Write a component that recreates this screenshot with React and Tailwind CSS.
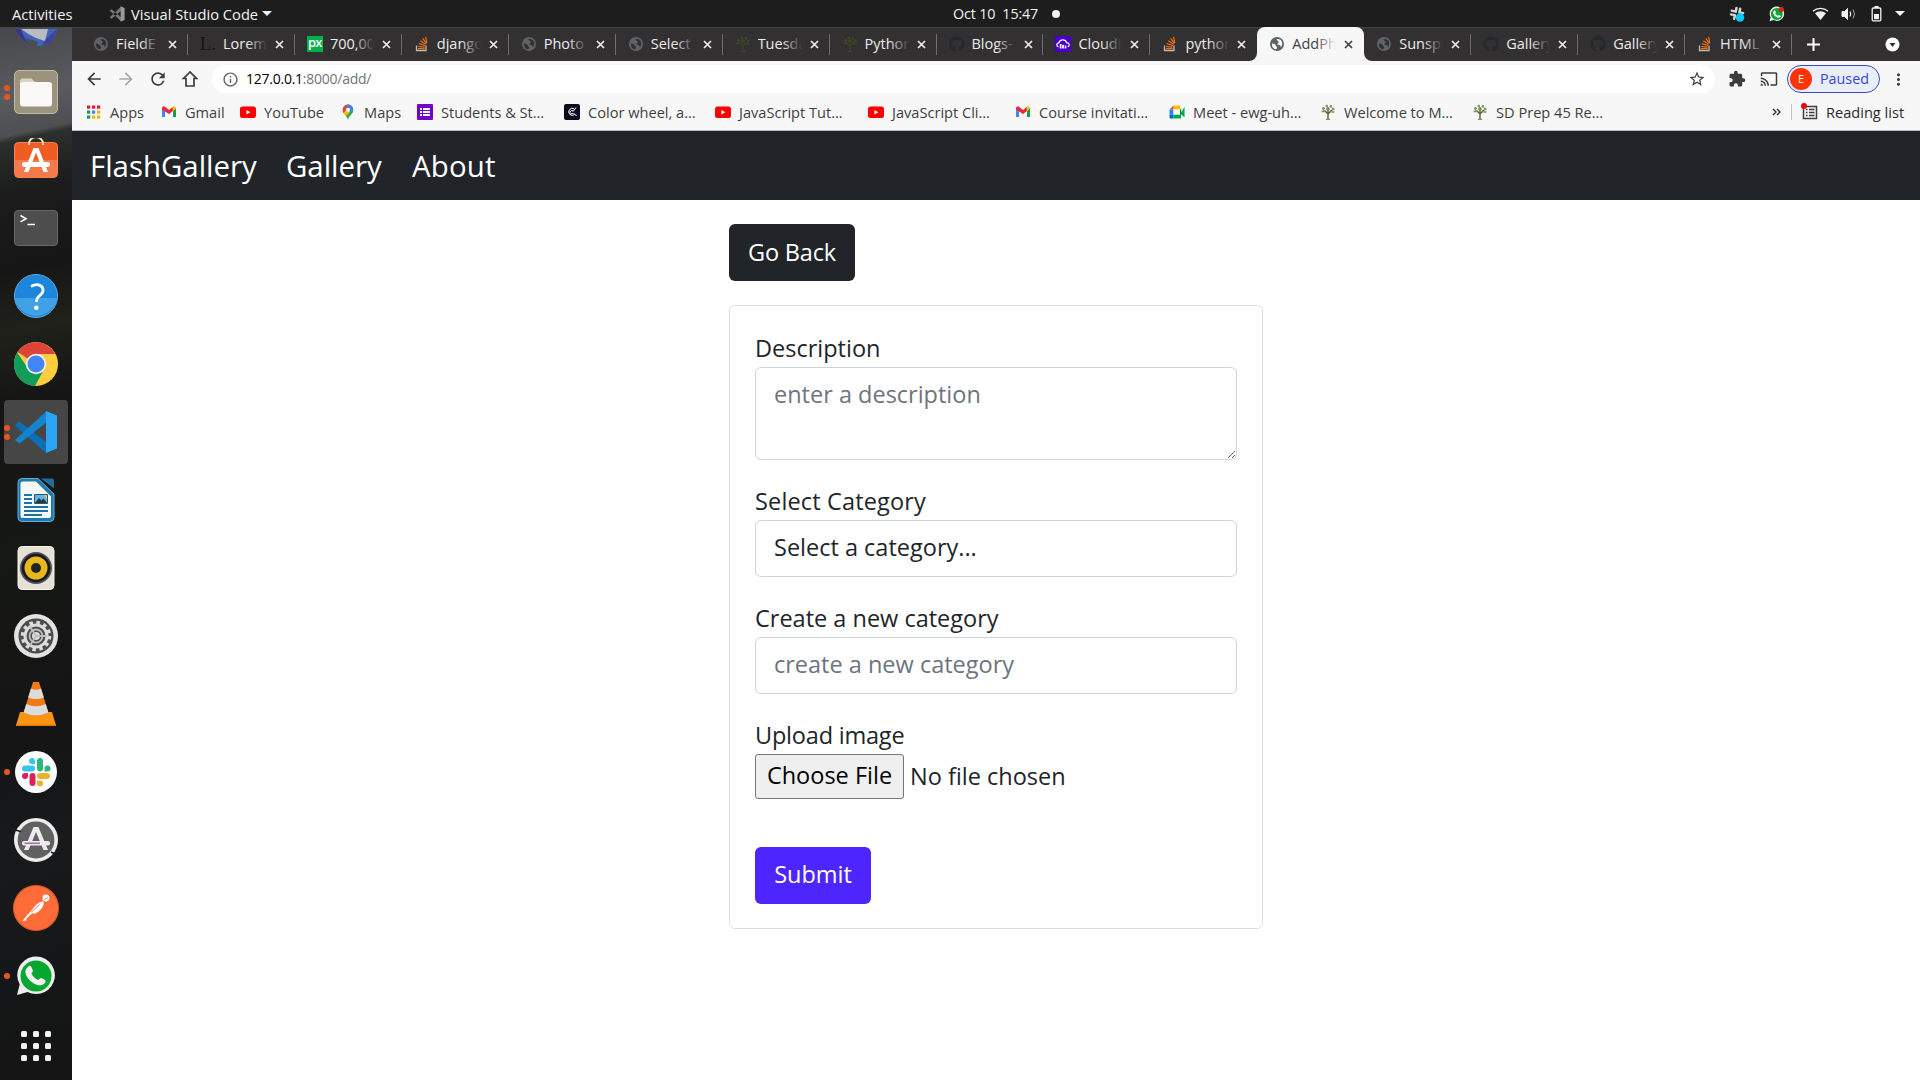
import React from "react";
import { FaGithub } from "react-icons/fa";
import { MdArrowBack, MdArrowForward, MdRefresh, MdInfoOutline, MdExtension, MdCast, MdStarBorder, MdMoreVert } from "react-icons/md";

const Box = ({ children, size = 44 }) => (
  <svg width={size} height={size} viewBox="0 0 44 44" className="block shrink-0">{children}</svg>
);

/* ---------- favicons, 16px ---------- */
const GlobeTab = () => (
  <svg width="16" height="16" viewBox="0 0 16 16" className="block">
    <circle cx="8" cy="8" r="7" fill="#5f6368" />
    <path d="M3 7.5C5 7.3 6.5 8.5 6.8 9.4 7 10.3 8.3 10.4 8 12c-.3 1.4-1.4 1.3-1.7 1.3C4 12.500 2.600 10.600 3 7.500zM7.500 3.200C8 5 9.500 4.600 9.600 6.200 9.600 7.400 8.200 7 8.400 8.200c.2.900 1.600.500 2.600 1 .800.500.800 1.600.500 2.400C13.800 9.700 14 5.500 11 3.500 9.800 2.800 8.500 2.800 7.500 3.200z" fill="currentColor" />
  </svg>
);
const LoremFav = () => (
  <span className="flex size-4 items-center justify-center font-['Liberation_Serif',serif] text-[19px] leading-4 text-[#161616]">L.</span>
);
const PxFav = () => (
  <span className="flex size-4 items-center justify-center bg-[#05b04a] pb-[3px] font-['Open_Sans',sans-serif] text-[13px] font-semibold leading-[13px] tracking-[-0.8px] text-white">px</span>
);
const StackFav = () => (
  <svg width="16" height="16" viewBox="0 0 16 16" className="block" fill="none">
    <path d="M2.500 9.500v5h9.500v-5" stroke="#bcbbbb" strokeWidth="1.300" />
    <path d="M4 12.700h6.600M4.100 10.500l6.500.7M4.800 7.700l6.200 1.800M6.300 4.800l5.400 3.500M8.600 2.300l4 5.100M11.600.800l1.200 6.200" stroke="#f4700c" strokeWidth="1.200" />
  </svg>
);
const TreeFav = ({ dark }) => (
  <svg width="16" height="16" viewBox="0 0 16 16" className="block" fill="none" stroke={dark ? "#3c4a27" : "#7d9160"}>
    <path d="M8 15.500V7M8 10L4.500 6.500M8 10l4-4M8 7V3" stroke={dark ? "#384322" : "#5b6a3c"} strokeWidth="1.500" />
    <path d="M6 15.300h4M2 4.500h3M3.500 3v3.500M5.500 2h2.500M7 .800v2.700M9.500 2.200h2.500M11 1v3M12 5h2.500M13 3.500v3M1.500 7.500h3M11.500 8h3M6 5h4" strokeWidth="1.300" />
  </svg>
);
const GithubFav = () => <FaGithub className="size-4 text-[#24292e]" />;
const CloudFav = () => (
  <svg width="16" height="16" viewBox="0 0 16 16" className="block">
    <rect width="16" height="16" fill="#4a00c8" />
    <path d="M3.500 11C.800 10 1.500 7 3.800 6.800 4.800 3 10.500 2.700 11.500 6.600c3 0 3.600 3.400 1.200 4.400" fill="none" stroke="#fff" strokeWidth="1.200" />
    <path d="M4.800 8h1.700v4.500H4.800zM7.200 8.800h1.700v3.700H7.200zM9.700 9.500h1.600v3H9.700z" fill="#fff" />
  </svg>
);
const AppsFav = () => (
  <svg width="16" height="16" viewBox="0 0 16 16" className="block">
    {[["#e8173b", "#e8173b", "#e8173b"], ["#0f9d58", "#4285f4", "#f4b400"], ["#0f9d58", "#f4b400", "#f4b400"]].map((row, r) =>
      row.map((c, i) => <rect key={`${r}${i}`} x={1 + i * 5} y={1.5 + r * 5} width="3.200" height="3.200" fill={c} />)
    )}
  </svg>
);
const GmailFav = () => (
  <svg width="16" height="16" viewBox="0 0 16 16" className="block">
    <path d="M1 4v9h3V6z" fill="#4285f4" /><path d="M15 4v9h-3V6z" fill="#0f9d58" />
    <path d="M1 4.500C1 2.500 3 2 4.300 3L8 6l3.700-3L12 7 8 10 1 5.500z" fill="#ea2a33" />
    <path d="M11.700 3C13 2 15 2.500 15 4.500L12 7.500z" fill="#fbbc04" />
  </svg>
);
const YoutubeFav = () => (
  <svg width="16" height="16" viewBox="0 0 16 16" className="block">
    <rect y="2.500" width="16" height="11.500" rx="2.500" fill="#f00" /><path d="M6.400 5.900v4.600l4-2.300z" fill="#fff" />
  </svg>
);
const MapsFav = () => (
  <svg width="16" height="16" viewBox="0 0 16 16" className="block">
    <clipPath id="pin"><path d="M8 .5a5.300 5.300 0 0 1 5.300 5.300C13.300 10 9.500 11 8 15.700 6.500 11 2.700 10 2.700 5.800A5.300 5.300 0 0 1 8 .5z" /></clipPath>
    <g clipPath="url(#pin)">
      <rect width="16" height="16" fill="#34a853" /><path d="M0 0h12L0 12z" fill="#ea4335" /><path d="M7 0h9v3L8 10z" fill="#4285f4" />
      <path d="M1 12l6.500-7.500L10 8l-5 5z" fill="#fbbc04" />
    </g>
    <circle cx="8" cy="5.800" r="2" fill="#fff" />
  </svg>
);
const FormsFav = () => (
  <svg width="16" height="16" viewBox="0 0 16 16" className="block">
    <rect width="16" height="16" rx="1" fill="#7200ca" />
    <path d="M3 4h2v2H3zM6 4h7v2H6zM3 7h2v2H3zM6 7h7v2H6zM3 10h2v2H3zM6 10h7v2H6z" fill="#fff" />
  </svg>
);
const WheelFav = () => (
  <svg width="16" height="16" viewBox="0 0 16 16" className="block" fill="none" stroke="#fff">
    <rect width="16" height="16" rx="2" fill="#0b0b1e" stroke="none" />
    <path d="M10 4.800A3.500 3.500 0 1 0 10.500 10.500M9 7a1.700 1.700 0 1 0 .2 2.200M9.200 7.500l2.800-4M9.500 9l3 3" strokeWidth="1" />
  </svg>
);
const MeetFav = () => (
  <svg width="16" height="16" viewBox="0 0 16 16" className="block">
    <path d="M4.500 1.500H11v4H4.500z" fill="#fbbc04" /><path d="M.500 5.500l4-4v4z" fill="#ea4335" /><path d="M.500 5.500h4v5h-4z" fill="#2684fc" />
    <path d="M.500 10.500h4v4H1.800a1.300 1.300 0 0 1-1.300-1.300z" fill="#0066da" /><path d="M4.500 10.500H11l4.500-7.700v10.400L12 10.500v4H4.500z" fill="#00ac47" />
    <path d="M4.500 5.500H11v5H4.500z" fill="#fff" /><path d="M11 5.500v5l1.200-1V4.300z" fill="#00832d" />
  </svg>
);

const TABS = [
  ["FieldE", GlobeTab], ["Lorem", LoremFav], ["700,00", PxFav], ["django", StackFav], ["Photo", GlobeTab], ["Select", GlobeTab],
  ["Tuesda", () => <TreeFav dark />], ["Python", () => <TreeFav dark />], ["Blogs-", GithubFav], ["Cloudi", CloudFav], ["python", StackFav],
  ["AddPh", GlobeTab], ["Sunspl", GlobeTab], ["Gallery", GithubFav], ["Gallery", GithubFav], ["HTML", StackFav],
];

const CloseX = () => (
  <svg width="9" height="9" viewBox="0 0 9 9" className="block shrink-0"><path d="M1 1l7 7M8 1L1 8" stroke="currentColor" strokeWidth="1.700" /></svg>
);

function Tab({ title, Icon, active, divider }) {
  return (
    <div className={`relative flex h-[34px] w-[106.94px] shrink-0 items-center pl-[12px] ${active ? "rounded-t-lg bg-[#f7f7f7] text-[#3c4043]" : "text-[#ececec]"}`}>
      <span className={`flex w-4 shrink-0 justify-center ${active ? "text-[#f7f7f7]" : "text-[#333031]"}`}><Icon /></span>
      <span className="relative ml-[7px] h-5 w-[44px] overflow-hidden whitespace-nowrap text-[14.500px] leading-5">
        {title}
        <span className={`absolute inset-y-0 right-0 w-[20px] bg-gradient-to-r ${active ? "from-transparent to-[#f7f7f7]" : "from-transparent to-[#333031]"}`} />
      </span>
      <span className="ml-[8px]"><CloseX /></span>
      {divider && <span className="absolute right-0 top-[7px] h-[21px] w-px bg-[#6e6c6d]" />}
      {active && (
        <>
          <svg width="8" height="8" className="absolute -left-2 bottom-0"><path d="M8 0v8H0a8 8 0 0 0 8-8z" fill="#f7f7f7" /></svg>
          <svg width="8" height="8" className="absolute -right-2 bottom-0"><path d="M0 0v8h8a8 8 0 0 1-8-8z" fill="#f7f7f7" /></svg>
        </>
      )}
    </div>
  );
}

const BOOKMARKS = [
  ["Apps", AppsFav, "w-[75px]"], ["Gmail", GmailFav, "w-[79px]"], ["YouTube", YoutubeFav, "w-[100px]"], ["Maps", MapsFav, "w-[77px]"],
  ["Students & St…", FormsFav, "w-[147px]"], ["Color wheel, a…", WheelFav, "w-[151px]"], ["JavaScript Tut…", YoutubeFav, "w-[153px]"],
  ["JavaScript Cli…", YoutubeFav, "w-[147px]"], ["Course invitati…", GmailFav, "w-[154px]"], ["Meet - ewg-uh…", MeetFav, "w-[151px]"],
  ["Welcome to M…", TreeFav, "w-[152px]"], ["SD Prep 45 Re…", TreeFav, "w-[150px]"],
];

/* ---------- dock icons ---------- */
const Files = () => (
  <Box>
    <rect x=".5" y=".5" width="43" height="43" rx="4.500" fill="#9c937c" stroke="#c0b9a6" />
    <path d="M6 11a2.500 2.500 0 0 1 2.500-2.500h9l3 3H22v8H6z" fill="#d9d4c5" />
    <rect x="6" y="12" width="32" height="24.500" rx="3" fill="#faf9f7" />
  </Box>
);
const Software = () => (
  <Box>
    <rect x=".5" y="4.500" width="43" height="35" rx="4" fill="#f15c22" stroke="#f88358" />
    <path d="M1 22h42v13.500a4 4 0 0 1-4 4H5a4 4 0 0 1-4-4z" fill="#f37b4b" />
    <path d="M15 7V5.500a7 6.500 0 0 1 14 0V7" fill="none" stroke="#f5deb4" strokeWidth="2" />
    <path d="M19.500 10h5l9.500 24h-4.500L22 14.500 14.500 34H10z" fill="#fff" />
    <rect x="8" y="24" width="28" height="5" rx="2" fill="#fff" />
  </Box>
);
const Terminal = () => (
  <Box>
    <rect x=".5" y="4.500" width="43" height="35" rx="3.500" fill="#4d4d4d" stroke="#686868" />
    <path d="M6.500 9.500l5.500 3.200-5.500 3.200M13.500 18.500H21" fill="none" stroke="#fff" strokeWidth="1.600" />
  </Box>
);
const Help = () => (
  <Box>
    <circle cx="22" cy="22" r="21.500" fill="#1c86dc" stroke="#5aaee8" />
    <path d="M.8 24h42.400A21.500 21.500 0 0 1 .8 24z" fill="#41a1e6" />
    <path d="M17 12.500c7-4 12.500-.5 12 4.500-.5 4.500-6.500 5-6.500 9.500v1.500" fill="none" stroke="#fff" strokeWidth="2.800" />
    <circle cx="22.300" cy="33.800" r="2.300" fill="#fff" />
  </Box>
);
const Chrome = () => (
  <Box>
    <circle cx="22" cy="22" r="22" fill="#ffcd40" />
    <path d="M22 22L3.500 10A22 22 0 0 1 41.200 12H22z" fill="#db4437" />
    <path d="M3.200 10.500A22 22 0 0 0 21 44l9-16.500-16-1z" fill="#119c57" />
    <circle cx="22" cy="22" r="10.200" fill="#f2f2f2" /><circle cx="22" cy="22" r="8.500" fill="#4285f4" />
  </Box>
);
const VsCode = () => (
  <Box>
    <path d="M1 15.500l4.500-4 28 21.500L32 43z" fill="#0b6fb8" />
    <path d="M1 30l4.500 3.500L33 12 32 1.500z" fill="#1584cf" />
    <path d="M32 1l11 4.500v33L32 43z" fill="#2aa6f4" />
  </Box>
);
const Writer = () => (
  <Box>
    <path d="M8 .5h16L40 16v23.500a4 4 0 0 1-4 4H8a4 4 0 0 1-4-4v-35a4 4 0 0 1 4-4z" fill="#1d7ab0" stroke="#67add5" />
    <path d="M8.500 3.500H22L37 18.500V38a2 2 0 0 1-2 2H8.500a2 2 0 0 1-2-2V5.500a2 2 0 0 1 2-2z" fill="#f7f7f7" />
    <path d="M27 .5h11a2 2 0 0 1 2 2v8z" fill="#1d6d9e" />
    <path d="M10 17h8M10 21h8M10 25h8M10 29h24M10 33h24M10 37h18" stroke="#1a72a7" strokeWidth="1.800" />
    <path d="M20.500 16.500h13v9h-13z" fill="#5fb5e5" stroke="#1a5b86" />
    <path d="M21 25l4-5 2.500 2.500 2-2 3.500 4.500z" fill="#333" /><path d="M29.500 17H33v4z" fill="#f4c430" />
  </Box>
);
const Rhythmbox = () => (
  <Box>
    <rect x="4" y=".5" width="36" height="43" rx="4" fill="#e6e0d5" stroke="#f7f4ed" />
    <circle cx="22" cy="22" r="16" fill="#4a5058" /><circle cx="22" cy="22" r="14.200" fill="#16191f" />
    <circle cx="22" cy="22" r="11.500" fill="#e9b91c" /><circle cx="22" cy="22" r="5" fill="#222" />
  </Box>
);
const Settings = () => (
  <Box>
    <circle cx="22" cy="22" r="22" fill="#e2e2e2" /><circle cx="22" cy="22" r="17.500" fill="#4c4c4c" />
    <circle cx="22" cy="22" r="13.500" fill="none" stroke="#dcdcdc" strokeWidth="3.500" strokeDasharray="3.500 3.570" />
    <circle cx="22" cy="22" r="11" fill="none" stroke="#dcdcdc" strokeWidth="3" />
    <circle cx="22" cy="22" r="6.500" fill="none" stroke="#bdbdbd" strokeWidth="1.800" />
    <circle cx="22" cy="22" r="4" fill="#dcdcdc" />
    <path d="M22 22h11M22 22l-6 9.500M22 22l-6-9.500" stroke="#bdbdbd" strokeWidth="1.800" />
  </Box>
);
const Vlc = () => (
  <Box>
    <path d="M6 30h32l4 13.500H2z" fill="#fb9410" />
    <path d="M2 42.500h40V45H2z" fill="#e97500" />
    <path d="M19 0q3-2 6 0l9.500 31q-12.500 6-25 0z" fill="#f07a13" />
    <path d="M16.900 6.500q5.100 2.500 10.200 0l2.700 9q-7.800 3-15.600 0zM12.300 22q9.700 4.500 19.400 0l2.700 8.500q-12.400 6-24.800 0z" fill="#dcdcdc" />
  </Box>
);
const Slack = () => (
  <Box>
    <circle cx="22" cy="22" r="21" fill="#fff" />
    <path d="M21 14v-3a3 3 0 1 0-3 3z" fill="#36c5f0" /><rect x="8" y="15.500" width="13" height="6" rx="3" fill="#36c5f0" />
    <rect x="23" y="8" width="6" height="13.500" rx="3" fill="#2eb67d" /><path d="M30.500 21.500v-3a3 3 0 1 1 3 3z" fill="#2eb67d" />
    <rect x="23" y="23" width="13" height="6" rx="3" fill="#ecb22e" /><path d="M23 30.500h3a3 3 0 1 1-3 3z" fill="#ecb22e" />
    <rect x="15.500" y="23" width="6" height="13" rx="3" fill="#e01e5a" /><path d="M14 23v3a3 3 0 1 1-3-3z" fill="#e01e5a" />
  </Box>
);
const Updater = () => (
  <Box>
    <circle cx="22" cy="22" r="20.200" fill="#616161" stroke="#ececec" strokeWidth="3.600" />
    <path d="M1 12l6 1.500M37 34l5 2.500" stroke="#1a1a1a" strokeWidth="1.500" />
    <path d="M19.500 9h5L34 32h-4.500L22 14 14.500 32H10z" fill="#ececec" />
    <rect x="8" y="23" width="28" height="4.500" rx="2" fill="#ececec" /><path d="M10.500 25.200H26" stroke="#9b4a9b" strokeWidth="1.200" />
  </Box>
);
const Postman = () => (
  <Box size={46}>
    <circle cx="22" cy="22" r="21.500" fill="#ff6c37" stroke="#dd5626" />
    <circle cx="31.500" cy="12.500" r="3.300" fill="#fff" />
    <path d="M29 15.500c-4 .5-8 4-10.500 8L13 29.500l-4 5 4-.5-.5-1.800 6-5.200 2.500.5c4.500-2 8-6 8.500-10z" fill="#fff" />
    <path d="M17.500 26l8-7.500M30 14l3.500-2" stroke="#ff6c37" strokeWidth=".8" />
  </Box>
);
const PhonePath = "M15 13.500c1.500-1.800 3-1.300 3.700.3l1.300 3c.4 1.200-.8 2.200-1.500 3.200 1.500 3 4 5.200 7 6.500 1-.8 2-2.500 3.200-2l3.300 1.800c1.500.8.8 2.500-.3 3.800-2.500 2.700-6.700 2-10.700-.2-4-2.400-6.500-5.400-8-9.200-1-3-.3-5.400 2-7.200z";
const Whatsapp = () => (
  <Box>
    <path d="M3 41l2.700-10.500A18.800 18.800 0 1 1 13.500 38z" fill="#ededed" />
    <circle cx="22" cy="22" r="15.500" fill="#05a82e" />
    <path d={PhonePath} fill="#f4f4f4" transform="translate(-1.200 -.5)" />
  </Box>
);
const AppGrid = () => (
  <Box>{[7, 19, 31].map((y) => [7, 19, 31].map((x) => <rect key={`${x}-${y}`} x={x} y={y} width="6" height="6" rx="1.500" fill="#f2f2f2" />))}</Box>
);

const DOCK = [
  [Files, 2], [Software, 0], [Terminal, 0], [Help, 0], [Chrome, 0], [VsCode, 2, true], [Writer, 0], [Rhythmbox, 0],
  [Settings, 0], [Vlc, 0], [Slack, 1], [Updater, 0], [Postman, 0], [Whatsapp, 1],
];

function Dock() {
  return (
    <aside className="flex w-[72px] shrink-0 flex-col overflow-hidden bg-[#161616] bg-[linear-gradient(168deg,#45474b_0px,#595b5f_70px,#4d4f51_108px,#2b302d_114px,#1b1c1b_165px,#161616_240px,#20211a_300px,#151515_370px,#161815_520px,#141414_700px,#17191b_800px,#141414_100%)]">
      <div className="flex h-[31px] shrink-0 justify-center">
        <svg width="44" height="20" viewBox="0 0 44 20" className="block">
          <path d="M1 2c3 7 8 12 14 15l-3-6 12 4c-1 2-1 3-2 4 11 0 19-6 21-17z" fill="#3f66b5" />
          <path d="M1 2c3 7 8 12 14 15-4-5-7-10-8-15z" fill="#3c3489" />
          <path d="M7 2c7 5 13 9 24 12L34 2z" fill="#b9bcc2" />
          <path d="M32 12l11-10-3 8-4 6-8 2z" fill="#3d41a8" />
        </svg>
      </div>
      {DOCK.map(([Icon, dots, active], i) => (
        <div key={i} className="relative flex h-[68px] shrink-0 items-center justify-center">
          {active && <span className="absolute inset-x-1 inset-y-0.5 rounded bg-[#464646]" />}
          {dots > 0 && (
            <span className="absolute left-1 flex flex-col gap-[3px]">
              {Array.from({ length: dots }, (_, d) => <span key={d} className="size-[6px] rounded-full bg-[#e95420]" />)}
            </span>
          )}
          <span className="relative"><Icon /></span>
        </div>
      ))}
      <div className="flex h-[68px] shrink-0 items-center justify-center pt-1"><AppGrid /></div>
    </aside>
  );
}

function SystemBar() {
  return (
    <header className="flex h-[27px] shrink-0 items-center bg-[#1d1d1d] text-[14.700px] leading-5 text-[#f2f2f2]">
      <span className="w-[109px] pl-3">Activities</span>
      <svg width="16" height="16" viewBox="0 0 44 44" className="mr-[6px]">
        <path d="M2 13l5-4 26 21v12zM2 31l5 4 26-21V2z" fill="#777" /><path d="M32 1l11 4.500v33L32 43z" fill="#999" />
      </svg>
      <span className="w-[126px] whitespace-nowrap">Visual Studio Code</span>
      <span className="ml-[5px] border-x-[5px] border-t-[5px] border-x-transparent border-t-[#f2f2f2]" />
      <span className="ml-[681px] w-[87px] whitespace-pre text-[14.300px] tracking-[-0.150px]">Oct 10  15:47</span>
      <span className="ml-[12px] size-2 rounded-full bg-[#f2f2f2]" />
      <span className="ml-auto flex items-center pr-[15px]">
        <svg width="16" height="16" viewBox="6 6 32 32" className="mr-[24px]">
          <g fill="#d5d5d5" transform="rotate(12 22 22)"><rect x="16" y="8" width="5" height="12" rx="2.500" /><rect x="8" y="15.500" width="13" height="4.500" rx="2" /><rect x="23.500" y="8" width="5" height="12" rx="2.500" /><rect x="25" y="15.500" width="11" height="4.500" rx="2" /><rect x="8" y="23" width="12" height="4.500" rx="2" /><rect x="16" y="23" width="5" height="12" rx="2.500" /></g>
          <circle cx="28" cy="29" r="8.500" fill="#00cdfa" />
        </svg>
        <svg width="16" height="16" viewBox="2 1 42 42" className="mr-[27px]">
          <path d="M3.500 41l2.700-10.500A19 19 0 1 1 14 38z" fill="#ededed" /><circle cx="22.500" cy="22" r="15.500" fill="#05a82e" />
          <path d={PhonePath} fill="#f4f4f4" /><circle cx="34" cy="10" r="7" fill="#e02020" />
        </svg>
        <svg width="17" height="14" viewBox="0 0 17 14" className="mr-[12px]">
          <path d="M1 4.200C5 .5 12 .5 16 4.200" fill="none" stroke="#f2f2f2" strokeWidth="1.300" /><path d="M3 6.300c3-2.700 8-2.700 11 0L8.500 13z" fill="#f2f2f2" />
        </svg>
        <svg width="16" height="14" viewBox="0 0 16 14" className="mr-[14px]" fill="none" stroke="#f2f2f2">
          <path d="M1 4.500h2.500L6.500 1.500v11L3.500 9.500H1z" fill="#f2f2f2" /><path d="M9 4.500q1.500 2.500 0 5" strokeWidth="1.300" /><path d="M12 2.500q3 4.500 0 9" stroke="#aaa" />
        </svg>
        <svg width="11" height="16" viewBox="0 0 11 16" className="mr-[13px]">
          <path d="M3.500 0h4v2h-4z" fill="#f2f2f2" /><rect x="1.200" y="2" width="8.600" height="12.800" rx="1" fill="none" stroke="#f2f2f2" strokeWidth="1.300" /><path d="M3 8h5v5.200H3z" fill="#f2f2f2" />
        </svg>
        <span className="border-x-[5px] border-t-[5px] border-x-transparent border-t-[#f2f2f2]" />
      </span>
    </header>
  );
}

function Toolbar() {
  return (
    <div className="flex h-[36px] items-center bg-[#f7f7f7] pl-[12px] text-[#3c3c3c]">
      <MdArrowBack className="mr-[12px] size-5" />
      <MdArrowForward className="mr-[12px] size-5 text-[#aaa]" />
      <MdRefresh className="mr-[12px] size-5" />
      <svg width="20" height="20" viewBox="0 0 20 20" className="mr-[12px]"><path d="M10 3L3.500 9.500H6V17h8V9.500h2.500z" fill="none" stroke="currentColor" strokeWidth="1.700" /></svg>
      <div className="flex h-7 w-[1503px] items-center rounded-full bg-white pl-[10px] pr-[9px]">
        <MdInfoOutline className="size-[17px] text-[#5f6368]" />
        <span className="ml-[7px] text-[14px] leading-5 tracking-[-0.250px] text-[#707478]"><span className="text-[#000]">127.0.0.1</span>:8000/add/</span>
        <MdStarBorder className="ml-auto size-[18px]" />
      </div>
      <MdExtension className="ml-[13px] size-[18px]" />
      <MdCast className="ml-[14px] size-[18px]" />
      <div className="ml-[9px] flex h-7 w-[93px] items-center rounded-full border border-[#3548d1] bg-[#e9eefa] pl-[2px]">
        <span className="flex size-[22px] items-center justify-center rounded-full bg-[#ff3405] text-[11px] text-white">E</span>
        <span className="ml-2 text-[14.300px] leading-5 text-[#3548d1]">Paused</span>
      </div>
      <MdMoreVert className="ml-[9px] size-[19px]" />
    </div>
  );
}

function BookmarksBar() {
  return (
    <div className="flex h-[34px] items-center border-b border-[#bbbbbb] bg-[#f7f7f7] pb-[3px] pl-[14px] text-[14.600px] leading-5 text-[#3f3f3f]">
      {BOOKMARKS.map(([label, Icon, width]) => (
        <div key={label} className={`flex shrink-0 items-center whitespace-nowrap ${width}`}>
          <span className="mr-2 w-4 shrink-0"><Icon /></span>
          {label}
        </div>
      ))}
      <div className="ml-auto flex items-center pr-[13px] text-[#2b2b2b]">
        <svg width="9" height="8" viewBox="0 0 9 8" className="mr-[10px]"><path d="M1 1l3 3-3 3M5 1l3 3-3 3" fill="none" stroke="currentColor" strokeWidth="1.400" /></svg>
        <span className="h-4 w-px bg-[#c4c4c4]" />
        <svg width="17" height="18" viewBox="0 0 17 18" className="ml-[9px] mr-[8px]">
          <path d="M2.500 3.500h13v12h-13z" fill="none" stroke="#3f3f3f" strokeWidth="1.500" /><path d="M5 6.500h1.500M8 6.500h5.500M5 9.500h1.500M8 9.500h5.500M5 12.500h1.500M8 12.500h5.500" stroke="#3f3f3f" strokeWidth="1.400" />
          <circle cx="3" cy="3" r="3" fill="#e30613" />
        </svg>
        <span className="w-[81px] whitespace-nowrap">Reading list</span>
      </div>
    </div>
  );
}

const Label = ({ children }) => <label className="-mt-px mb-px block h-9 leading-9">{children}</label>;
const field = "block w-full rounded-[6px] border border-[#ced4da] bg-white px-[18px] placeholder:text-[#6c757d] placeholder:opacity-100";

function AddPhotoPage() {
  return (
    <>
      <nav className="flex h-[69px] shrink-0 items-center gap-[30px] bg-[#212529] pl-[18px] pt-px text-[29.400px] text-white">
        <a className="w-[166px] whitespace-nowrap">FlashGallery</a>
        <a className="w-[96px]">Gallery</a>
        <a className="tracking-[0.200px]">About</a>
      </nav>
      <main className="flex grow flex-col items-center bg-white pt-6 text-[23.500px] leading-9 text-[#212529]">
        <div className="w-[534px]">
          <button className="block h-[57px] w-[126px] whitespace-nowrap rounded-[6px] bg-[#212529] pb-0.5 tracking-[-0.200px] text-white">Go Back</button>
          <form className="mt-6 h-[624px] rounded-[6px] border border-[#dfdfdf] p-[25px]">
            <Label>Description</Label>
            <textarea placeholder="enter a description" className={`${field} h-[93px] resize py-[8px] leading-9`} />
            <div className="h-6" />
            <Label><span className="tracking-[0.150px]">Select Category</span></Label>
            <div className={`${field} h-[57px] pt-[8px]`}>Select a category...</div>
            <div className="h-6" />
            <Label>Create a new category</Label>
            <input placeholder="create a new category" className={`${field} h-[57px] pb-1`} />
            <div className="h-6" />
            <Label><span className="tracking-[-0.200px]">Upload image</span></Label>
            <div className="flex h-[45px] items-center">
              <button type="button" className="h-[45px] w-[149px] whitespace-nowrap rounded-[3px] border border-[#767676] bg-[#efefef] pb-1 text-black">Choose File</button>
              <span className="ml-[6px] pb-0.5">No file chosen</span>
            </div>
            <button type="button" className="mt-12 block h-[57px] w-[116px] rounded-[6px] bg-[#4d26ff] pb-1 text-white">Submit</button>
          </form>
        </div>
      </main>
    </>
  );
}

export default function App() {
  return (
    <div className="flex h-[1080px] w-[1920px] flex-col overflow-hidden font-['Open_Sans','Noto_Sans',sans-serif]">
      <SystemBar />
      <div className="flex min-h-0 grow">
        <Dock />
        <div className="flex w-[1848px] flex-col">
          <div className="flex h-[34px] items-center bg-[#333031] pl-[9px] shadow-[inset_0_1px_0_#454243]">
            {TABS.map(([title, Icon], i) => (
              <Tab key={i} title={title} Icon={Icon} active={i === 11} divider={i !== 10 && i !== 11} />
            ))}
            <svg width="13" height="13" viewBox="0 0 13 13" className="ml-[15px]"><path d="M6.500 0v13M0 6.500h13" stroke="#fff" strokeWidth="2" /></svg>
            <svg width="15" height="15" viewBox="0 0 15 15" className="ml-auto mr-[20px]"><circle cx="7.500" cy="7.500" r="7" fill="#fff" /><path d="M4.500 6h6l-3 4z" fill="#333031" /></svg>
          </div>
          <Toolbar />
          <BookmarksBar />
          <AddPhotoPage />
        </div>
      </div>
    </div>
  );
}
